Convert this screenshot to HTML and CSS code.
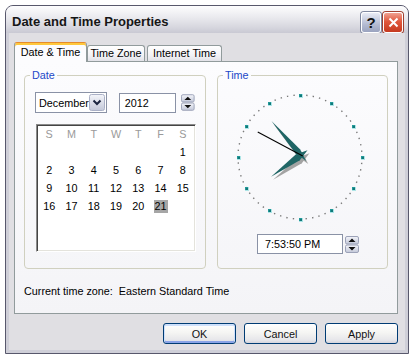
FILE: index.html
```html
<!DOCTYPE html>
<html lang="en">
<head>
    <meta charset="UTF-8">
    <title>Date and Time Properties</title>
    <link rel="stylesheet" href="styles.css">
</head>
<body>
    <svg class="defs" width="0" height="0">
        <defs>
            <linearGradient id="btnFace" x1="0" y1="0" x2="0" y2="1">
                <stop offset="0" stop-color="#f4f5fa"/>
                <stop offset="1" stop-color="#c3c8d9"/>
            </linearGradient>
        </defs>
    </svg>

    <div class="window">
        <div class="titlebar">
            <span class="title">Date and Time Properties</span>
            <div class="caption-buttons">
                <span class="cap-btn help">?</span>
                <span class="cap-btn close">
                    <svg width="11" height="11" viewBox="0 0 11 11"><path d="M1.5 1.5 L9.5 9.5 M9.5 1.5 L1.5 9.5" stroke="#fff" stroke-width="2"/></svg>
                </span>
            </div>
        </div>

        <div class="client">
            <!-- tabs -->
            <div class="tabs">
                <div class="tab active">Date &amp; Time</div>
                <div class="tab tz">Time Zone</div>
                <div class="tab net">Internet Time</div>
            </div>

            <div class="panel">
                <div class="groups">
                    <fieldset class="group date-group">
                        <legend>Date</legend>
                        <div class="date-row">
                            <div class="combo">
                                <span>December</span>
                                <svg width="16" height="17" viewBox="0 0 16 17"><rect x=".5" y=".5" width="15" height="16" rx="2" fill="url(#btnFace)" stroke="#aab0c6"/><path d="M4.5 6.5 L8 10 L11.5 6.5" stroke="#1b2540" stroke-width="2" fill="none"/></svg>
                            </div>
                            <div class="edit year">2012</div>
                            <svg class="spin" width="14" height="17" viewBox="0 0 14 17"><rect x=".5" y=".5" width="13" height="7.5" rx="1.5" fill="url(#btnFace)" stroke="#9ca2b8"/><rect x=".5" y="9" width="13" height="7.5" rx="1.5" fill="url(#btnFace)" stroke="#9ca2b8"/><path d="M3.5 6 L7 2.5 L10.5 6Z M3.5 11 L7 14.5 L10.5 11Z" fill="#111"/></svg>
                        </div>
                        <div class="calendar">
                            <div class="cal">
                                <span class="hd">S</span><span class="hd">M</span><span class="hd">T</span><span class="hd">W</span><span class="hd">T</span><span class="hd">F</span><span class="hd">S</span>
                                <span></span><span></span><span></span><span></span><span></span><span></span><span><i>1</i></span>
                                <span><i>2</i></span><span><i>3</i></span><span><i>4</i></span><span><i>5</i></span><span><i>6</i></span><span><i>7</i></span><span><i>8</i></span>
                                <span><i>9</i></span><span><i>10</i></span><span><i>11</i></span><span><i>12</i></span><span><i>13</i></span><span><i>14</i></span><span><i>15</i></span>
                                <span><i>16</i></span><span><i>17</i></span><span><i>18</i></span><span><i>19</i></span><span><i>20</i></span><span><i class="sel">21</i></span>
                            </div>
                        </div>
                    </fieldset>

                    <fieldset class="group time-group">
                        <legend>Time</legend>
                        <svg class="clock" width="140" height="140" viewBox="0 0 140 140">
                            <circle cx="70" cy="70" r="62" fill="none" stroke="#7a7a7a" stroke-width="1.4" stroke-dasharray="1.4 5.0926" stroke-dashoffset="0.7"/>
                            <g class="hour-dots" shape-rendering="crispEdges">
                                <rect x="69" y="7" width="3" height="3"/><rect x="100" y="15" width="3" height="3"/>
                                <rect x="122" y="38" width="3" height="3"/><rect x="131" y="69" width="3" height="3"/>
                                <rect x="122" y="100" width="3" height="3"/><rect x="100" y="122" width="3" height="3"/>
                                <rect x="69" y="131" width="3" height="3"/><rect x="38" y="122" width="3" height="3"/>
                                <rect x="15" y="100" width="3" height="3"/><rect x="7" y="69" width="3" height="3"/>
                                <rect x="15" y="38" width="3" height="3"/><rect x="38" y="15" width="3" height="3"/>
                            </g>
                            <g transform="translate(73 71)" fill="#a3a3a3">
                                <polygon transform="rotate(234)" points="0,-37 3.5,-4 0,8 -3.5,-4"/>
                                <polygon transform="rotate(319)" points="0,-45 3,-5 0,8 -3,-5"/>
                            </g>
                            <g transform="translate(71 68)" fill="#1f6565">
                                <polygon transform="rotate(234)" points="0,-37 3.5,-4 0,8 -3.5,-4"/>
                                <polygon transform="rotate(319)" points="0,-45 3,-5 0,8 -3,-5"/>
                                <line transform="rotate(298)" x1="0" y1="2" x2="0" y2="-49" stroke="#000" stroke-width="1"/>
                            </g>
                        </svg>
                        <div class="time-row">
                            <div class="edit time">7:53:50 PM</div>
                            <svg class="spin" width="14" height="17" viewBox="0 0 14 17"><rect x=".5" y=".5" width="13" height="7.5" rx="1.5" fill="url(#btnFace)" stroke="#9ca2b8"/><rect x=".5" y="9" width="13" height="7.5" rx="1.5" fill="url(#btnFace)" stroke="#9ca2b8"/><path d="M3.5 6 L7 2.5 L10.5 6Z M3.5 11 L7 14.5 L10.5 11Z" fill="#111"/></svg>
                        </div>
                    </fieldset>
                </div>
                <p class="zone">Current time zone:&nbsp; Eastern Standard Time</p>
            </div>

            <div class="buttons">
                <button class="btn default">OK</button>
                <button class="btn">Cancel</button>
                <button class="btn">Apply</button>
            </div>
        </div>
    </div>
</body>
</html>
```

FILE: styles.css
```css
body {
    margin: 0;
    background: #fff;
    font-family: "Liberation Sans", Arial, sans-serif;
    font-size: 10.8px;
    color: #000;
}
.defs {
    position: absolute;
}
.window {
    margin: 5px 0 0 5px;
    width: 404px;
    height: 349px;
    box-sizing: border-box;
    border: 1px solid #58586c;
    border-radius: 8px 8px 0 0;
    background: #cfcfd8;
    display: flex;
    flex-direction: column;
    overflow: hidden;
}
.titlebar {
    height: 27px;
    flex: none;
    display: flex;
    background: linear-gradient(#fdfdfe, #ebebef 40%, #d6d6de 80%, #c9c9d3);
}
.title {
    flex: 1;
    padding: 8px 0 0 6px;
    font-size: 13px;
    font-weight: bold;
    line-height: 16px;
    color: #161616;
}
.caption-buttons {
    display: flex;
    gap: 2px;
    margin: 6px 5px 0 0;
}
.cap-btn {
    width: 20px;
    height: 21px;
    box-sizing: border-box;
    border: 1px solid #fff;
    border-radius: 3px;
    display: flex;
    align-items: center;
    justify-content: center;
    box-shadow: 0 0 0 1px #8088a0;
}
.help {
    background: linear-gradient(#e8ebf5, #b4bbd2 60%, #9aa3bf);
    font-size: 15px;
    font-weight: bold;
    color: #111;
}
.close {
    background: linear-gradient(#f0a090, #e0573c 45%, #c53a20);
    box-shadow: 0 0 0 1px #a04030;
}
.client {
    flex: 1;
    margin: 0 3px 3px;
    background: #e0dfe3;
    display: flex;
    flex-direction: column;
}
.tabs {
    display: flex;
    align-items: flex-end;
    height: 19px;
    margin: 9px 0 0 5px;
}
.tab {
    height: 16px;
    box-sizing: border-box;
    border: 1px solid #919b9c;
    border-bottom: none;
    border-radius: 3px 3px 0 0;
    background: linear-gradient(#fff, #f3f3f6 60%, #e2e2e8);
    line-height: 15px;
    text-align: center;
}
.tab.active {
    position: relative;
    z-index: 1;
    width: 73px;
    height: 20px;
    margin-bottom: -1px;
    border-top-color: #e68b2c;
    background: #fcfcfe;
    box-shadow: inset 0 2px 0 #ffc83c;
    line-height: 19px;
}
.tab.tz {
    width: 58px;
}
.tab.net {
    width: 75px;
    margin-left: 2px;
}
.panel {
    width: 384px;
    height: 253px;
    box-sizing: border-box;
    margin-left: 5px;
    padding: 7px 9px 0;
    border: 1px solid #919b9c;
    background: linear-gradient(#fcfcfe, #f4f4f7);
}
.groups {
    display: flex;
    gap: 11px;
}
.group {
    margin: 0;
    min-width: 0;
    box-sizing: border-box;
    padding: 0 10px 16px;
    border: 1px solid #d0d0bf;
    border-radius: 4px;
}
.group legend {
    margin-left: -5px;
    padding: 0 2px;
    line-height: 13px;
    color: #1c48c8;
}
.date-group {
    width: 182px;
}
.time-group {
    width: 171px;
    padding-bottom: 14px;
}
.date-row {
    display: flex;
    align-items: center;
    height: 21px;
    margin-top: 10px;
}
.combo {
    width: 73px;
    height: 21px;
    box-sizing: border-box;
    padding-left: 3px;
    border: 1px solid #8a92a6;
    background: #fff;
    display: flex;
    align-items: center;
    justify-content: space-between;
}
.combo svg {
    margin-right: 1px;
}
.edit {
    height: 20px;
    box-sizing: border-box;
    border: 1px solid #8a92a6;
    background: #fff;
    display: flex;
    align-items: center;
}
.year {
    width: 59px;
    margin-left: 12px;
    padding-left: 5px;
}
.spin {
    display: block;
    margin-left: 5px;
}
.calendar {
    width: 160px;
    height: 128px;
    box-sizing: border-box;
    margin: 11px 0 0 1px;
    border: 1px solid;
    border-color: #8a8a8a #fff #fff #8a8a8a;
    box-shadow: inset 1px 1px 0 #444, inset -1px -1px 0 #e4e3dc;
    background: #fff;
}
.cal {
    display: grid;
    grid-template-columns: repeat(7, 1fr);
    grid-auto-rows: 18px;
    padding: 2px 1px 0;
}
.cal span {
    display: flex;
    justify-content: center;
    align-items: flex-start;
    padding-top: 1px;
}
.cal .hd {
    color: #9a9a9a;
}
.cal i {
    font-style: normal;
    line-height: 13px;
    padding: 0 1px;
}
.cal i.sel {
    background: #a6a6a6;
}
.clock {
    display: block;
    margin: 5px 0 0 2px;
}
.hour-dots rect {
    fill: #127878;
    stroke: #3cc8c8;
    stroke-width: 0.4;
}
.time-row {
    display: flex;
    align-items: center;
    margin: 7px 0 0 29px;
}
.time {
    width: 86px;
    padding-left: 7px;
}
.time-row .spin {
    margin-left: 2px;
}
.zone {
    margin: 16px 0 0;
    line-height: 13px;
}
.buttons {
    display: flex;
    justify-content: flex-end;
    gap: 8px;
    width: 384px;
    margin: 9px 0 0 5px;
}
.btn {
    width: 73px;
    height: 21px;
    box-sizing: border-box;
    padding: 0;
    border: 1px solid #003c74;
    border-radius: 3px;
    background: linear-gradient(#fff, #f5f5f3 45%, #e6e6ea 85%, #d4d4dc);
    font: inherit;
    font-weight: normal;
    color: #111;
}
.btn.default {
    box-shadow: inset 0 1px 0 1px #cee0fb, inset 0 -1px 0 1px #8aa4e8;
}
```
